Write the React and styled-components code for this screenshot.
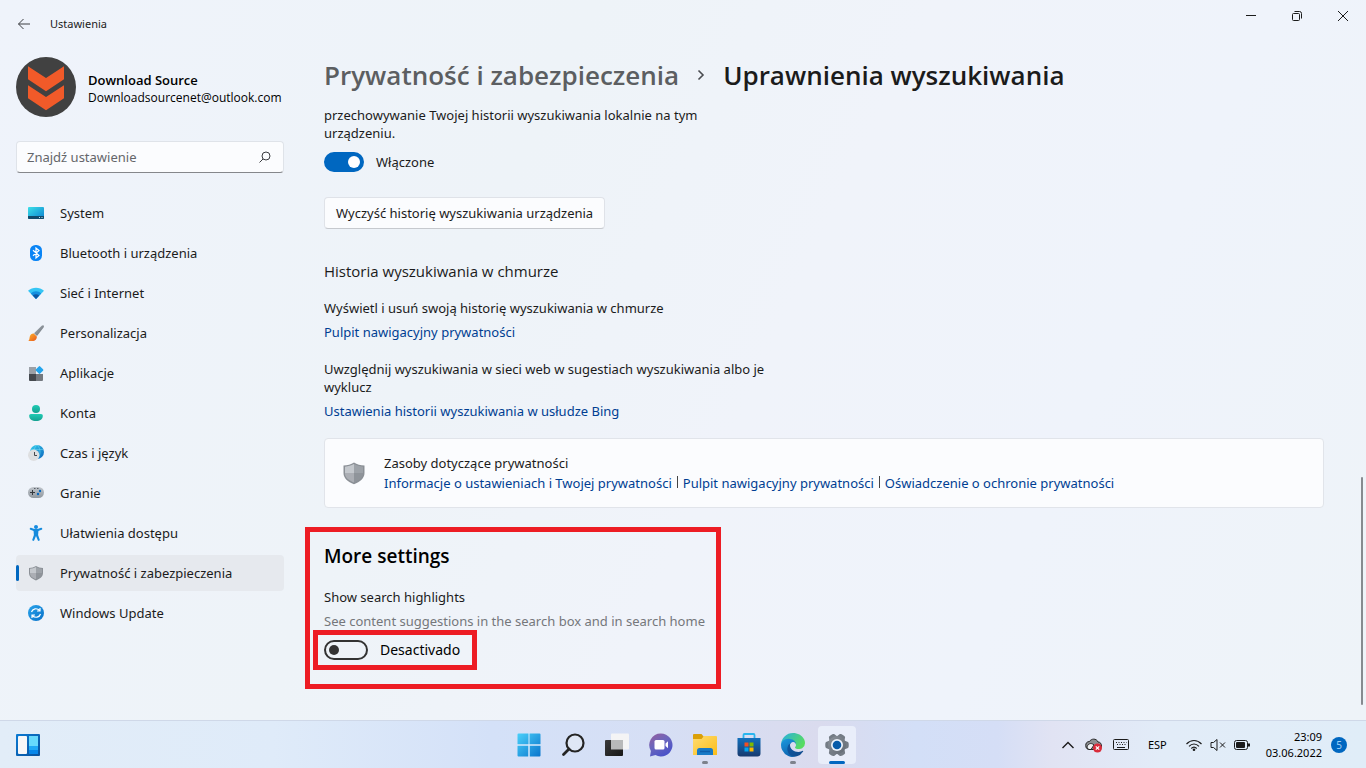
import React, { useState } from "react";
import styled, { createGlobalStyle } from "styled-components";

const GlobalStyle = createGlobalStyle`
  * {
    box-sizing: border-box;
  }

  body {
    margin: 0;
    font-family: "Noto Sans", "Open Sans", sans-serif;
    font-size: 13px;
    line-height: 18px;
    color: #1b1b1b;
  }

  button,
  input {
    font: inherit;
    color: inherit;
  }

  h1, h2, h3, p, ul {
    margin: 0;
    padding: 0;
  }
`;

const Desktop = styled.div`
  display: flex;
  flex-direction: column;
  min-height: 100vh;
`;

const SettingsWindow = styled.div`
  flex: 1;
  display: flex;
  flex-direction: column;
  background: linear-gradient(115deg, #eff3fb 0%, #eef3f8 35%, #f0f3fa 55%, #eff3fb 75%, #eef3f8 100%);
`;

const TitleBar = styled.header`
  display: flex;
  justify-content: space-between;
  height: 48px;
`;

const TitleLeft = styled.div`
  display: flex;
  align-items: center;
  gap: 18px;
  padding-left: 16px;
  font-size: 11px;
`;

const IconButton = styled.button`
  display: flex;
  align-items: center;
  justify-content: center;
  width: ${(props) => props.$width || 16}px;
  height: ${(props) => props.$height || 16}px;
  padding: 0;
  border: none;
  background: none;
  cursor: pointer;
`;

const WindowButtons = styled.div`
  display: flex;
`;

const Body = styled.div`
  flex: 1;
  display: flex;
`;

const Sidebar = styled.aside`
  flex: 0 0 300px;
  padding: 9px 16px 0;
`;

const Profile = styled.div`
  display: flex;
  align-items: center;
  gap: 12px;
  margin-bottom: 24px;
`;

const ProfileText = styled.div`
  padding-top: 4px;
  font-family: "Open Sans", sans-serif;
  color: #000;
`;

const ProfileName = styled.p`
  font-weight: 600;
`;

const ProfileMail = styled.p`
  font-size: 12px;
`;

const SearchBox = styled.div`
  display: flex;
  align-items: center;
  height: 32px;
  margin-bottom: 22px;
  padding: 0 12px 0 10px;
  background: #fbfcfe;
  border: 1px solid #dfe3e9;
  border-bottom-color: #85878b;
  border-radius: 4px;
`;

const SearchInput = styled.input`
  flex: 1;
  min-width: 0;
  padding: 0;
  border: none;
  outline: none;
  background: none;

  &::placeholder {
    color: #64666a;
    opacity: 1;
  }
`;

const NavList = styled.ul`
  display: flex;
  flex-direction: column;
  gap: 4px;
  list-style: none;
`;

const NavLink = styled.a`
  display: flex;
  align-items: center;
  height: 36px;
  border-radius: 4px;
  color: inherit;
  text-decoration: none;
  background: ${(props) => (props.$active ? "#e6e9ee" : "transparent")};

  &::before {
    content: "";
    width: 3px;
    height: 16px;
    margin-right: 9px;
    border-radius: 2px;
    background: ${(props) => (props.$active ? "#0067c0" : "transparent")};
  }

  svg {
    margin-right: 16px;
  }
`;

const Main = styled.main`
  flex: 1;
  min-width: 0;
  padding: 7px 37px 31px 24px;
`;

const Breadcrumb = styled.h1`
  display: flex;
  align-items: center;
  gap: 17px;
  margin-bottom: 11px;
  font-family: "Open Sans", sans-serif;
  font-size: 26px;
  line-height: 40px;
  font-weight: 600;
  white-space: nowrap;

  a {
    color: #5c5e61;
    text-decoration: none;
  }
`;

const Paragraph = styled.p`
  max-width: ${(props) => props.$width || 460}px;
  color: ${(props) => (props.$muted ? "#75777b" : "inherit")};
  margin-bottom: ${(props) => props.$space || 0}px;
`;

const SwitchLabel = styled.label`
  display: flex;
  align-items: center;
  gap: 12px;
  font-size: ${(props) => (props.$large ? 14 : 13)}px;
  line-height: 20px;
`;

const Switch = styled.input`
  appearance: none;
  display: flex;
  align-items: center;
  width: ${(props) => (props.$large ? 44 : 40)}px;
  height: 20px;
  margin: 0;
  padding: 0 3px;
  border: 2px solid #333;
  border-radius: 10px;

  &::before {
    content: "";
    width: 10px;
    height: 10px;
    border-radius: 50%;
    background: #333;
  }

  &:checked {
    justify-content: flex-end;
    padding: 0 2px;
    background: #0067c0;
    border-color: #0067c0;
  }

  &:checked::before {
    width: 12px;
    height: 12px;
    background: #fff;
  }
`;

const ClearButton = styled.button`
  display: block;
  height: 32px;
  margin: 25px 0 32px;
  padding: 0 11px;
  background: #fbfcfe;
  border: 1px solid #dfe2e8;
  border-bottom-color: #c6c9ce;
  border-radius: 4px;
`;

const SectionTitle = styled.h2`
  margin-bottom: 18px;
  font-family: "Open Sans", sans-serif;
  font-size: 15px;
  line-height: 20px;
  font-weight: 400;
`;

const TextLink = styled.a`
  display: inline-block;
  color: #003e92;
  text-decoration: none;
`;

const LinkRow = styled.div`
  margin-bottom: ${(props) => props.$space}px;
`;

const PrivacyCard = styled.section`
  display: flex;
  align-items: center;
  gap: 18px;
  min-height: 70px;
  padding: 0 17px;
  background: #fbfcfe;
  border: 1px solid #e1e4ea;
  border-radius: 4px;
`;

const CardLinks = styled.div`
  display: flex;
  align-items: center;
  margin-top: 2px;

  a + a {
    margin-left: 5px;
  }

  a + a::before {
    content: "";
    display: inline-block;
    width: 1px;
    height: 12px;
    margin-right: 5px;
    background: #444;
  }
`;

const Highlight = styled.section`
  width: 416px;
  height: 162px;
  margin: 19px 0 0 -19px;
  padding: 12px 3px 0;
  border: 5px solid #ed1c24;
`;

const HighlightText = styled.div`
  padding-left: 11px;
  white-space: nowrap;
`;

const MoreTitle = styled.h2`
  margin-bottom: 20px;
  font-family: "Open Sans", sans-serif;
  font-size: 19px;
  line-height: 24px;
  font-weight: 600;
  color: #000;
`;

const SwitchFrame = styled.div`
  width: 164px;
  padding: 5px 6px;
  border: 5px solid #ed1c24;
  color: #000;
`;

const ScrollBar = styled.div`
  display: flex;
  align-items: flex-end;
  padding: 0 3px 15px 0;
`;

const ScrollThumb = styled.div`
  width: 2px;
  height: 228px;
  border-radius: 1px;
  background: #868a8f;
`;

const TaskBar = styled.footer`
  display: grid;
  grid-template-columns: 1fr auto 1fr;
  align-items: center;
  height: 48px;
  border-top: 1px solid #cfd8e8;
  background: linear-gradient(90deg, #e2edf8 0%, #dfebf9 20%, #d4e1f8 36%, #d6dff5 48%, #dadbee 60%, #d3dff7 67%, #d5def6 73%, #e1e3f3 77%, #e2ecf8 85%, #e0edf8 100%);
`;

const TaskLeft = styled.div`
  display: flex;
  padding-left: 16px;
`;

const AppList = styled.div`
  display: flex;
  gap: 6px;
`;

const AppButton = styled.button`
  display: flex;
  flex-direction: column;
  align-items: center;
  justify-content: flex-end;
  gap: 4px;
  width: 38px;
  height: 38px;
  padding: 0;
  border: none;
  border-radius: 4px;
  background: ${(props) => (props.$state === "active" ? "#e9eefa" : "transparent")};

  &::after {
    content: "";
    width: ${(props) => (props.$state === "active" ? 16 : 6)}px;
    height: 3px;
    border-radius: 2px;
    background: ${(props) =>
      ({ active: "#0067c0", open: "#7d828c" })[props.$state] || "transparent"};
  }
`;

const Tray = styled.div`
  display: flex;
  align-items: center;
  justify-content: flex-end;
  padding-right: 19px;
  font-size: 11px;
  line-height: 16px;
  color: #000;
`;

const TrayIcons = styled.div`
  display: flex;
  align-items: center;
  gap: ${(props) => props.$gap}px;
`;

const Language = styled.span`
  margin: 0 19px;
`;

const Clock = styled.time`
  margin: 0 9px 0 16px;
  text-align: right;
`;

const Badge = styled.span`
  width: 16px;
  height: 16px;
  border-radius: 50%;
  background: #0067c0;
  color: #9fd0f7;
  font-size: 10px;
  text-align: center;
`;

const Svg = ({ size = 16, width, height, box, children }) => (
  <svg
    width={width || size}
    height={height || size}
    viewBox={box || `0 0 ${width || size} ${height || size}`}
    fill="none"
    aria-hidden="true"
  >
    {children}
  </svg>
);

const Gradient = ({ id, from, to, x2 = 1, y2 = 1 }) => (
  <linearGradient id={id} x1="0" y1="0" x2={x2} y2={y2}>
    <stop offset="0" stopColor={from} />
    <stop offset="1" stopColor={to} />
  </linearGradient>
);

const Avatar = () => (
  <Svg size={60}>
    <circle cx="30" cy="30" r="30" fill="#414141" />
    <path d="M12 9.300L30 21l18-11.700v13L30 34.300 12 22.300z" fill="#f15a29" />
    <path d="M12 28.300L30 40l18-11.700v13L30 53.300 12 41.300z" fill="#f15a29" />
  </Svg>
);

const SystemIcon = () => (
  <Svg>
    <Gradient id="system" from="#3ce0e8" to="#0b7fd0" />
    <rect y="2" width="16" height="12" rx="1" fill="url(#system)" />
    <path d="M0 11h16v2a1 1 0 0 1-1 1H1a1 1 0 0 1-1-1z" fill="#124a6c" />
    <path d="M11 12.500h1M13.500 12.500h1" stroke="#b8e8fa" />
  </Svg>
);

const BluetoothIcon = () => (
  <Svg>
    <rect x="2" width="12" height="16" rx="5.500" fill="#0a84f5" />
    <path d="M5 5.300l6 5.200L8 13V3l3 2.500-6 5.200" stroke="#fff" strokeWidth="1.200" />
  </Svg>
);

const NetworkIcon = () => (
  <Svg>
    <path d="M8 14L0 5.800C4.500 1.700 11.500 1.700 16 5.800z" fill="#35c5f4" />
    <path d="M8 14L2.800 8.400c3-2.800 7.400-2.800 10.400 0z" fill="#1490df" />
    <path d="M8 14l-3.300-3.500c2-1.700 4.600-1.700 6.600 0z" fill="#0c57a4" />
  </Svg>
);

const BrushIcon = () => (
  <Svg>
    <Gradient id="brush" from="#aab0b6" to="#687078" />
    <Gradient id="tip" from="#ffb52b" to="#e8571c" />
    <path d="M15.600.4c.6.600.4 1.400 0 2L9 11 6 8.300 13.700.8c.6-.6 1.300-.9 1.900-.4z" fill="url(#brush)" />
    <path d="M5.800 8.500l3 2.900c.3 2.500-1.600 4.600-4.300 4.600H.3c1.500-1.200.9-2.500 1.500-4.500.5-1.900 2.200-3.200 4-3z" fill="url(#tip)" />
  </Svg>
);

const AppsIcon = () => (
  <Svg>
    <path d="M1 2h7v7H1z" fill="#9ba0a7" />
    <path d="M1 9h7v7H2a1 1 0 0 1-1-1z" fill="#45494f" />
    <path d="M8 9h7v6a1 1 0 0 1-1 1H8z" fill="#747980" />
    <rect x="8.500" y="2" width="6" height="6" rx="1" transform="rotate(45 11.500 5)" fill="#24a5ed" />
  </Svg>
);

const AccountIcon = () => (
  <Svg>
    <Gradient id="account" from="#20cbb4" to="#14a191" x2={0} />
    <circle cx="8" cy="4" r="4" fill="url(#account)" />
    <path d="M3 9h10c1.200 0 1.800.8 1.800 1.700C14.800 14 12 16 8 16s-6.800-2-6.800-5.300C1.200 9.800 1.800 9 3 9z" fill="url(#account)" />
  </Svg>
);

const TimeIcon = () => (
  <Svg>
    <Gradient id="globe" from="#37d0ee" to="#0b65bd" />
    <circle cx="9" cy="7" r="7" fill="url(#globe)" />
    <path d="M3 4.500h12M9 0C5 3 5 10 9 14M9 0c4 3 4 11 0 14" stroke="#75dcf4" strokeWidth=".5" />
    <circle cx="5.700" cy="10.300" r="5.700" fill="#dedfe1" />
    <path d="M6.500 7v3.500H9" stroke="#45484c" />
  </Svg>
);

const GamingIcon = () => (
  <Svg>
    <Gradient id="gaming" from="#c1c6cc" to="#91989f" x2={0} />
    <rect y="2" width="16" height="11" rx="5.500" fill="url(#gaming)" />
    <path d="M2 7.500h5M4.500 5v5" stroke="#34383d" />
    <path d="M6 3.500h1.500M9 3.500h1.500" stroke="#596069" />
    <circle cx="12" cy="6" r="1.200" fill="#0867be" />
    <circle cx="10" cy="9" r="1.200" fill="#0867be" />
  </Svg>
);

const AccessIcon = () => (
  <Svg>
    <circle cx="8" cy="2" r="2" fill="#158be0" />
    <path d="M2.700 3.800L6 5h4l3.300-1.200M8 5v5" stroke="#168bdd" strokeWidth="2" strokeLinecap="round" />
    <path d="M5.500 5h5l-.4 5 1.800 5.200-1.800.7L8 11l-2.100 4.900-1.800-.7L5.900 10z" fill="#168bdd" />
  </Svg>
);

const ShieldIcon = ({ size = 16 }) => (
  <Svg size={size} box="0 0 16 16">
    <path d="M8 1c2 1.300 4.300 2 7 2v5c0 3.500-2.900 5.800-7 7.500C3.900 13.800 1 11.500 1 8V3c2.700 0 5-.7 7-2z" fill="#8b9096" />
    <path d="M8 2c1.800 1 3.800 1.600 6 1.800V8c0 2.800-2.200 4.800-6 6.300z" fill="#9da2a8" />
    <path d="M8 2v12.300C4.200 12.800 2 10.800 2 8V3.800C4.200 3.600 6.200 3 8 2z" fill="#c4c8cd" />
    <path d="M2 8h12c0 2.800-2.200 4.800-6 6.300C4.200 12.800 2 10.800 2 8z" fill="#6f757c" opacity=".3" />
  </Svg>
);

const UpdateIcon = () => (
  <Svg>
    <Gradient id="update" from="#2aa4eb" to="#0870c8" />
    <circle cx="8" cy="8" r="8" fill="url(#update)" />
    <path d="M3.500 7C4.500 3.400 9 2.700 11.800 5.500M12 3v3H9M12.500 9c-1 3.600-5.500 4.300-8.300 1.500M4 13v-3h3" stroke="#fff" strokeWidth="1.200" />
  </Svg>
);

const WidgetsIcon = () => (
  <Svg width={24} height={22}>
    <Gradient id="widgets" from="#0b7bd4" to="#09509b" />
    <rect width="24" height="22" rx="1" fill="url(#widgets)" />
    <rect x="2" y="2" width="9" height="18" rx="1" fill="#f7f7f8" />
    <path d="M13 2h9v10h-9z" fill="#67d9fc" />
    <path d="M13 12h9v4h-9z" fill="#20a8f5" />
    <path d="M13 16h9v4h-9z" fill="#0786e9" />
  </Svg>
);

const StartIcon = () => (
  <Svg size={24}>
    <linearGradient id="start" gradientUnits="userSpaceOnUse" x1="0" y1="0" x2="24" y2="24">
      <stop offset="0" stopColor="#4bd2fb" />
      <stop offset="1" stopColor="#0873cb" />
    </linearGradient>
    <path d="M1.500.5h11v11h-12v-10a1 1 0 0 1 1-1zM12.500.5h10a1 1 0 0 1 1 1v10h-11zM.5 12.500h11v11h-10a1 1 0 0 1-1-1zM12.500 12.500h11v10a1 1 0 0 1-1 1h-10z" fill="url(#start)" />
    <path d="M12 0v24M0 12h24" stroke="#d8edfd" />
  </Svg>
);

const FindIcon = () => (
  <Svg size={24}>
    <circle cx="14" cy="10" r="8.500" fill="#dfe7f5" stroke="#242424" strokeWidth="2.200" />
    <path d="M8 16l-5.500 5.500" stroke="#242424" strokeWidth="2.800" strokeLinecap="round" />
  </Svg>
);

const TaskViewIcon = () => (
  <Svg size={24}>
    <Gradient id="taskview" from="#3b3b3b" to="#171717" />
    <rect x="6" y=".5" width="18" height="16" rx="1" fill="#f4f4f5" />
    <rect x="0" y="7" width="18" height="16" rx="1" fill="url(#taskview)" />
    <path d="M6 7h12v9.500H6z" fill="#b8b9ba" />
  </Svg>
);

const ChatIcon = () => (
  <Svg size={24}>
    <linearGradient id="chat" x1="0" y1="0" x2=".6" y2="1">
      <stop offset="0" stopColor="#985f9d" />
      <stop offset=".5" stopColor="#6b66bd" />
      <stop offset="1" stopColor="#4a52c8" />
    </linearGradient>
    <path d="M12 .5a11.500 11.500 0 1 1-5.500 21.600L1 23.500l.9-5.600A11.500 11.500 0 0 1 12 .5z" fill="url(#chat)" />
    <rect x="5.500" y="7" width="10" height="9.500" rx="1.500" fill="#fff" />
    <path d="M16.500 10.500l2.500-2.300v7l-2.500-2.300z" fill="#fff" />
  </Svg>
);

const ExplorerIcon = () => (
  <Svg size={24}>
    <Gradient id="folder" from="#ffdc70" to="#fbbd19" />
    <path d="M0 2a1 1 0 0 1 1-1h7.500L11 4v4H0z" fill="#dba008" />
    <path d="M0 6h8.500L11 3h12a1 1 0 0 1 1 1v18H0z" fill="url(#folder)" />
    <path d="M4 22v-4.500A2.500 2.500 0 0 1 6.500 15h11a2.500 2.500 0 0 1 2.500 2.500V22z" fill="#187ac6" />
    <path d="M7 18.500h10" stroke="#0d5eaa" strokeWidth="1.500" />
  </Svg>
);

const StoreIcon = () => (
  <Svg size={24}>
    <Gradient id="store" from="#1270bd" to="#183a6e" x2={0} />
    <path d="M6.500 6V2a1 1 0 0 1 1-1h9a1 1 0 0 1 1 1v4" stroke="#28b5ee" strokeWidth="1.800" />
    <path d="M.5 5h23v15.500a3 3 0 0 1-3 3h-17a3 3 0 0 1-3-3z" fill="url(#store)" />
    <path d="M7.500 9.500h4v4h-4z" fill="#f25022" />
    <path d="M12.500 9.500h4v4h-4z" fill="#7fba00" />
    <path d="M7.500 14.500h4v4h-4z" fill="#00a4ef" />
    <path d="M12.500 14.500h4v4h-4z" fill="#ffb900" />
  </Svg>
);

const EdgeIcon = () => (
  <Svg size={24} box="0 0 256 256">
    <Gradient id="edgeDark" from="#0c59a4" to="#114a8b" />
    <Gradient id="edgeBlue" from="#1b9de2" to="#0d65b0" x2={0.4} />
    <Gradient id="edgeGreen" from="#28aee5" to="#57dc61" y2={0.5} />
    <path fill="url(#edgeDark)" d="M231 190.500c-3.400 1.800-6.900 3.400-10.500 4.700a102 102 0 0 1-35.900 6.500c-47.400 0-88.600-32.600-88.600-74.400a31.500 31.500 0 0 1 16.400-27.300c-42.800 1.800-53.800 46.400-53.800 72.500 0 73.900 68.100 81.400 82.800 81.400 7.900 0 19.800-2.300 27-4.600l1.300-.4a128.300 128.300 0 0 0 66.600-52.800 4 4 0 0 0-5.300-5.600z" />
    <path fill="url(#edgeBlue)" d="M105.700 241.400A79.200 79.200 0 0 1 83 220a80.700 80.700 0 0 1 29.500-120c3.100-1.500 8.500-4.100 15.600-4a32.300 32.300 0 0 1 25.700 13 31.900 31.900 0 0 1 6.300 18.700c0-.2 24.500-79.600-80-79.600-43.900 0-80 41.600-80 78.200a130.200 130.200 0 0 0 12.100 56 128 128 0 0 0 156.400 67 75.500 75.500 0 0 1-62.800-8z" />
    <path fill="url(#edgeGreen)" d="M152.300 148.900c-.8 1-3.300 2.500-3.300 5.600 0 2.600 1.700 5.100 4.700 7.200 14.400 10 41.500 8.700 41.600 8.700a59.600 59.600 0 0 0 30.300-8.300 61.400 61.400 0 0 0 30.400-52.900c.3-22.400-8-37.300-11.300-43.900C223.500 23.800 177.700 0 128 0A128 128 0 0 0 0 126.200c.5-36.500 36.800-66 80-66 3.500 0 23.500.3 42 10 16.300 8.600 24.900 18.900 30.900 29.200 6.200 10.700 7.200 24.100 7.200 29.500s-2.700 13.400-7.800 20z" />
  </Svg>
);

const GearIcon = () => (
  <Svg size={24} box="-12 -12 24 24">
    <Gradient id="gear" from="#8c939b" to="#626a73" />
    {[0, 60, 120, 180, 240, 300].map((angle) => (
      <path key={angle} d="M6-5L11-3c1 .6 1 5.400 0 6L6 5z" fill="#747c85" transform={`rotate(${angle})`} />
    ))}
    <circle r="9" fill="url(#gear)" />
    <circle r="6" fill="#edf2fa" />
    <circle r="4.300" fill="#075ba9" />
  </Svg>
);

const navItems = [
  { label: "System", Icon: SystemIcon },
  { label: "Bluetooth i urządzenia", Icon: BluetoothIcon },
  { label: "Sieć i Internet", Icon: NetworkIcon },
  { label: "Personalizacja", Icon: BrushIcon },
  { label: "Aplikacje", Icon: AppsIcon },
  { label: "Konta", Icon: AccountIcon },
  { label: "Czas i język", Icon: TimeIcon },
  { label: "Granie", Icon: GamingIcon },
  { label: "Ułatwienia dostępu", Icon: AccessIcon },
  { label: "Prywatność i zabezpieczenia", Icon: ShieldIcon },
  { label: "Windows Update", Icon: UpdateIcon },
];

const apps = [
  { name: "Start", Icon: StartIcon },
  { name: "Wyszukaj", Icon: FindIcon },
  { name: "Widok zadań", Icon: TaskViewIcon },
  { name: "Czat", Icon: ChatIcon },
  { name: "Eksplorator plików", Icon: ExplorerIcon, state: "open" },
  { name: "Microsoft Store", Icon: StoreIcon },
  { name: "Microsoft Edge", Icon: EdgeIcon, state: "open" },
  { name: "Ustawienia", Icon: GearIcon, state: "active" },
];

function App() {
  const [activeNav, setActiveNav] = useState("Prywatność i zabezpieczenia");
  const [history, setHistory] = useState(true);
  const [highlights, setHighlights] = useState(false);

  return (
    <Desktop>
      <GlobalStyle />
      <SettingsWindow>
        <TitleBar>
          <TitleLeft>
            <IconButton aria-label="Wstecz">
              <Svg>
                <path d="M14 8H2.500M7.500 3l-5 5 5 5" stroke="#3c3e42" />
              </Svg>
            </IconButton>
            <span>Ustawienia</span>
          </TitleLeft>
          <WindowButtons>
            <IconButton $width={46} $height={32} aria-label="Minimalizuj">
              <Svg size={10}>
                <path d="M0 4.500h10" stroke="#1b1b1b" />
              </Svg>
            </IconButton>
            <IconButton $width={46} $height={32} aria-label="Przywróć">
              <Svg size={10}>
                <rect x=".5" y="2.500" width="7" height="7" rx="1" stroke="#1b1b1b" />
                <path d="M2.500.5h5a2 2 0 0 1 2 2v5" stroke="#1b1b1b" />
              </Svg>
            </IconButton>
            <IconButton $width={46} $height={32} aria-label="Zamknij">
              <Svg size={10}>
                <path d="M0 0l10 10M10 0L0 10" stroke="#1b1b1b" />
              </Svg>
            </IconButton>
          </WindowButtons>
        </TitleBar>

        <Body>
          <Sidebar>
            <Profile>
              <Avatar />
              <ProfileText>
                <ProfileName>Download Source</ProfileName>
                <ProfileMail>Downloadsourcenet@outlook.com</ProfileMail>
              </ProfileText>
            </Profile>
            <SearchBox>
              <SearchInput type="text" placeholder="Znajdź ustawienie" aria-label="Znajdź ustawienie" />
              <Svg size={12}>
                <circle cx="7" cy="5" r="4" stroke="#3a3c40" />
                <path d="M4 8L.5 11.500" stroke="#3a3c40" />
              </Svg>
            </SearchBox>
            <nav>
              <NavList>
                {navItems.map(({ label, Icon }) => (
                  <li key={label}>
                    <NavLink
                      href="#"
                      $active={label === activeNav}
                      onClick={() => setActiveNav(label)}
                    >
                      <Icon />
                      {label}
                    </NavLink>
                  </li>
                ))}
              </NavList>
            </nav>
          </Sidebar>

          <Main>
            <Breadcrumb>
              <a href="#">Prywatność i zabezpieczenia</a>
              <Svg width={10} height={12}>
                <path d="M2.500 1.500L7 6l-4.500 4.500" stroke="#4a4c50" strokeWidth="1.600" />
              </Svg>
              <span>Uprawnienia wyszukiwania</span>
            </Breadcrumb>

            <Paragraph $width={400} $space={10}>
              przechowywanie Twojej historii wyszukiwania lokalnie na tym urządzeniu.
            </Paragraph>
            <SwitchLabel>
              <Switch
                type="checkbox"
                role="switch"
                checked={history}
                onChange={(e) => setHistory(e.target.checked)}
              />
              {history ? "Włączone" : "Wyłączone"}
            </SwitchLabel>
            <ClearButton>Wyczyść historię wyszukiwania urządzenia</ClearButton>

            <SectionTitle>Historia wyszukiwania w chmurze</SectionTitle>
            <Paragraph $space={6}>Wyświetl i usuń swoją historię wyszukiwania w chmurze</Paragraph>
            <LinkRow $space={19}>
              <TextLink href="#">Pulpit nawigacyjny prywatności</TextLink>
            </LinkRow>
            <Paragraph $space={6}>
              Uwzględnij wyszukiwania w sieci web w sugestiach wyszukiwania albo je wyklucz
            </Paragraph>
            <LinkRow $space={18}>
              <TextLink href="#">Ustawienia historii wyszukiwania w usłudze Bing</TextLink>
            </LinkRow>

            <PrivacyCard>
              <ShieldIcon size={24} />
              <div>
                <p>Zasoby dotyczące prywatności</p>
                <CardLinks>
                  <TextLink href="#">Informacje o ustawieniach i Twojej prywatności</TextLink>
                  <TextLink href="#">Pulpit nawigacyjny prywatności</TextLink>
                  <TextLink href="#">Oświadczenie o ochronie prywatności</TextLink>
                </CardLinks>
              </div>
            </PrivacyCard>

            <Highlight>
              <HighlightText>
                <MoreTitle>More settings</MoreTitle>
                <Paragraph $space={6}>Show search highlights</Paragraph>
                <Paragraph $muted>See content suggestions in the search box and in search home</Paragraph>
              </HighlightText>
              <SwitchFrame>
                <SwitchLabel $large>
                  <Switch
                    $large
                    type="checkbox"
                    role="switch"
                    checked={highlights}
                    onChange={(e) => setHighlights(e.target.checked)}
                  />
                  {highlights ? "Activado" : "Desactivado"}
                </SwitchLabel>
              </SwitchFrame>
            </Highlight>
          </Main>
          <ScrollBar>
            <ScrollThumb />
          </ScrollBar>
        </Body>
      </SettingsWindow>

      <TaskBar>
        <TaskLeft>
          <IconButton $width={24} $height={22} aria-label="Widżety">
            <WidgetsIcon />
          </IconButton>
        </TaskLeft>
        <AppList>
          {apps.map(({ name, Icon, state }) => (
            <AppButton key={name} $state={state} aria-label={name}>
              <Icon />
            </AppButton>
          ))}
        </AppList>
        <Tray>
          <TrayIcons $gap={10}>
            <Svg width={14} height={16}>
              <path d="M1.500 11L7 5.500l5.500 5.500" stroke="#1b1b1b" strokeWidth="1.400" />
            </Svg>
            <Svg width={18} height={16}>
              <path d="M5 12.500a4 4 0 0 1-.5-8C6 1.500 11.500 1 13 5c2.500 0 3.500 2 3.500 4s-1.500 3.500-3.500 3.500z" fill="#8d8f92" stroke="#242424" />
              <path d="M2 11c0-4 4-6 7-3l-3 4.500H4z" fill="#f0f2f5" stroke="#242424" />
              <circle cx="12.500" cy="11" r="4.500" fill="#d92c3b" />
              <path d="M10.800 9.300l3.400 3.400M14.200 9.300l-3.400 3.400" stroke="#fff" strokeWidth="1.200" />
            </Svg>
            <Svg width={16} height={16}>
              <rect x=".5" y="2.500" width="15" height="10" rx="1" stroke="#1b1b1b" />
              <path d="M3 5.500h10.500M4 7.500h10" stroke="#1b1b1b" strokeDasharray="1 1.500" />
              <path d="M4 10.500h8" stroke="#1b1b1b" />
            </Svg>
          </TrayIcons>
          <Language>ESP</Language>
          <TrayIcons $gap={8}>
            <Svg width={16} height={16}>
              <path d="M.5 7C5 2.300 11 2.300 15.500 7M3 9.300c3-3.100 7-3.100 10 0M5.300 11.500c1.700-1.700 3.700-1.700 5.400 0" stroke="#1b1b1b" strokeWidth="1.200" />
              <circle cx="8" cy="12.800" r="1.300" fill="#1b1b1b" />
            </Svg>
            <Svg width={16} height={16}>
              <path d="M1 5.500h2.500l3.500-3v11l-3.500-3H1z" stroke="#1b1b1b" />
              <path d="M10 5.500l5 5M15 5.500l-5 5" stroke="#1b1b1b" />
            </Svg>
            <Svg width={16} height={16}>
              <rect x=".5" y="3.500" width="13" height="9" rx="2" stroke="#1b1b1b" />
              <rect x="2" y="5" width="9" height="6" rx="1" fill="#1b1b1b" />
              <path d="M15 6.500v3" stroke="#1b1b1b" strokeWidth="2" />
            </Svg>
          </TrayIcons>
          <Clock>
            23:09
            <br />
            03.06.2022
          </Clock>
          <Badge>5</Badge>
        </Tray>
      </TaskBar>
    </Desktop>
  );
}

export default App;
